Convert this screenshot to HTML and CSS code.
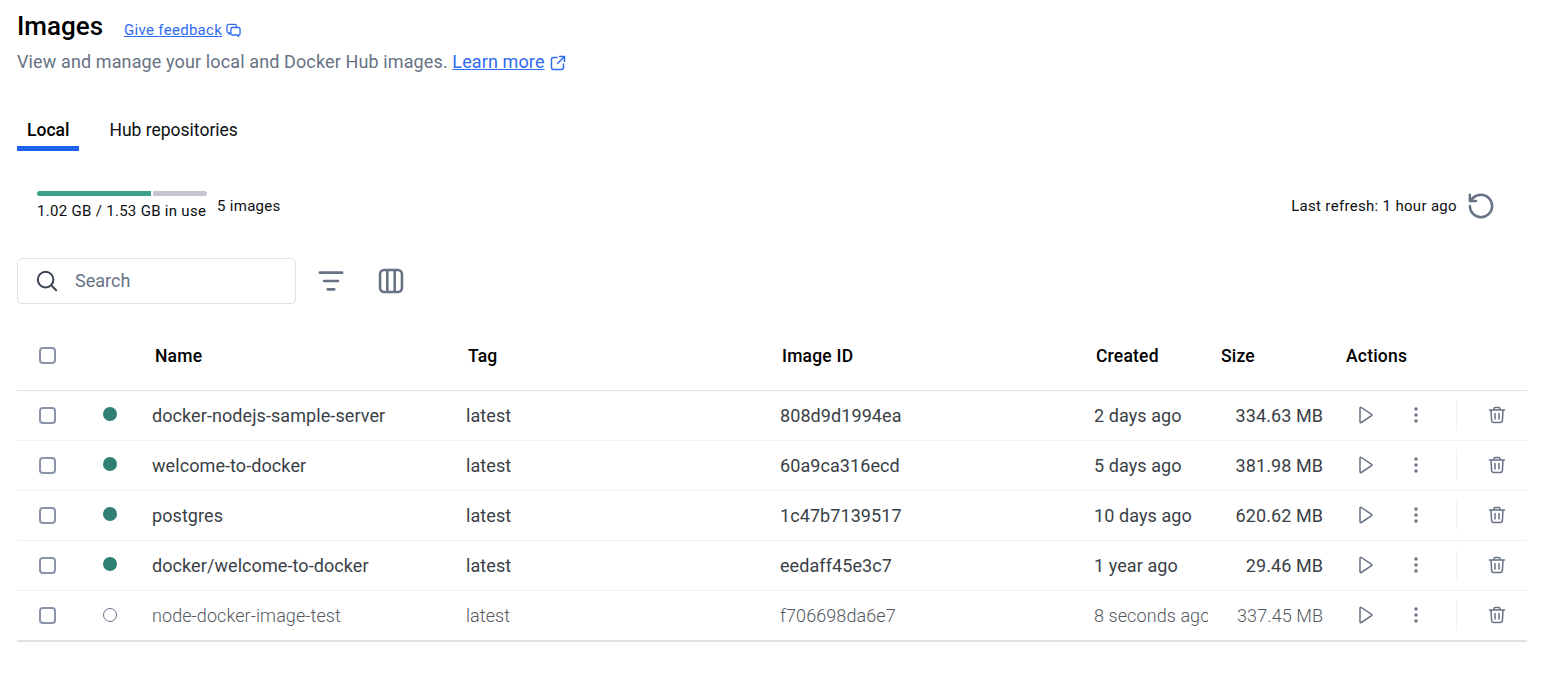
FILE: index.html
```html
<!DOCTYPE html>
<html lang="en">
<head>
<meta charset="utf-8">
<title>Images</title>
<link rel="stylesheet" href="styles.css">
</head>
<body>
<svg class="defs" width="0" height="0" aria-hidden="true">
  <defs>
    <symbol id="play" viewBox="0 0 20 20"><path d="M4 3.200v13.600c0 .7.7 1 1.300.7l10.300-6.800c.5-.3.5-1 0-1.300L5.300 2.500c-.6-.3-1.300 0-1.300.7z" fill="none" stroke="currentColor" stroke-width="1.500" stroke-linejoin="round"/></symbol>
    <symbol id="dots" viewBox="0 0 20 20"><circle cx="10" cy="4" r="1.700" fill="currentColor"/><circle cx="10" cy="10" r="1.700" fill="currentColor"/><circle cx="10" cy="16" r="1.700" fill="currentColor"/></symbol>
    <symbol id="trash" viewBox="0 0 20 20"><path d="M2.500 5h15M7 5V3.800C7 3 7.600 2.500 8.300 2.500h3.400c.7 0 1.300.5 1.300 1.300V5M4 5l.6 10.500c.1 1.200 1 2 2.200 2h6.400c1.200 0 2.100-.8 2.200-2L16 5M8 8.500v5.500M12 8.500v5.500" fill="none" stroke="currentColor" stroke-width="1.500" stroke-linecap="round" stroke-linejoin="round"/></symbol>
  </defs>
</svg>
<main class="page">
  <header class="head">
    <div class="title-row">
      <h1 class="title">Images</h1>
      <a class="feedback" href="#">Give feedback</a>
      <svg class="feedback-icon" viewBox="0 0 16 16"><path d="M11 4.500V3.200C11 2 10.200 1.500 9.300 1.500H2.700C1.700 1.500 1 2.200 1 3.200v5.300c0 1 .7 1.700 1.700 1.700h.5v1.800l2-1.800" fill="none" stroke="currentColor" stroke-width="1.400" stroke-linejoin="round"/><path d="M6.700 4.800h6.800c.9 0 1.500.6 1.500 1.500v5c0 .9-.6 1.500-1.500 1.500v1.700l-2-1.700H6.700c-.9 0-1.500-.6-1.500-1.500v-5c0-.9.600-1.500 1.500-1.500z" fill="none" stroke="currentColor" stroke-width="1.400" stroke-linejoin="round"/></svg>
    </div>
    <p class="subtitle">View and manage your local and Docker Hub images. <a class="learn" href="#">Learn more</a>
      <svg class="learn-icon" viewBox="0 0 16 16"><path d="M7 2.500H3.500c-1 0-2 .8-2 2v8c0 1.200 1 2 2 2h8c1.200 0 2-.8 2-2V9M9.500 1.500h5v5M14.500 1.500L7.500 8.500" fill="none" stroke="currentColor" stroke-width="1.500" stroke-linecap="round" stroke-linejoin="round"/></svg>
    </p>
  </header>

  <nav class="tabs">
    <a class="tab tab-active" href="#">Local</a>
    <a class="tab" href="#">Hub repositories</a>
  </nav>

  <section class="usage">
    <div class="usage-left">
      <div class="meter">
        <div class="meter-bar"><span class="meter-used"></span><span class="meter-free"></span></div>
        <div class="meter-text">1.02 GB / 1.53 GB in use</div>
      </div>
      <div class="count">5 images</div>
    </div>
    <div class="refresh">
      <span>Last refresh: 1 hour ago</span>
      <svg class="refresh-icon" viewBox="1.500 1.500 21 21"><path d="M3 12a9 9 0 1 0 9-9 9.750 9.750 0 0 0-6.740 2.740L3 8M3 3v5h5" fill="none" stroke="currentColor" stroke-width="2" stroke-linecap="round" stroke-linejoin="round"/></svg>
    </div>
  </section>

  <section class="toolbar">
    <label class="search">
      <svg class="search-icon" viewBox="0 0 24 24"><circle cx="10.500" cy="10.500" r="8.500" fill="none" stroke="currentColor" stroke-width="2.200"/><path d="M16.800 16.800L22 22" stroke="currentColor" stroke-width="2.200" stroke-linecap="round"/></svg>
      <span class="search-text">Search</span>
    </label>
    <svg class="tool-icon" viewBox="0 0 28 28"><path d="M2 5h24M6.500 14h15M10.500 23h7" stroke="currentColor" stroke-width="2.800" stroke-linecap="round"/></svg>
    <svg class="tool-icon" viewBox="0 0 28 28"><rect x="2.200" y="2.200" width="23.600" height="23.600" rx="4.500" fill="none" stroke="currentColor" stroke-width="2.800"/><path d="M10 2.500v23M18 2.500v23" stroke="currentColor" stroke-width="2.800"/></svg>
  </section>

  <section class="table">
    <div class="row row-head">
      <div class="cell-check"><span class="checkbox"></span></div>
      <div></div>
      <div class="th th-name">Name</div>
      <div class="th">Tag</div>
      <div class="th">Image ID</div>
      <div class="th">Created</div>
      <div class="th th-size">Size</div>
      <div class="th th-actions">Actions</div>
    </div>

    <div class="row">
      <div class="cell-check"><span class="checkbox"></span></div>
      <div class="cell-dot"><span class="dot"></span></div>
      <div class="td">docker-nodejs-sample-server</div>
      <div class="td">latest</div>
      <div class="td">808d9d1994ea</div>
      <div class="td td-created">2 days ago</div>
      <div class="td td-size">334.63 MB</div>
      <div class="actions">
        <svg class="act act-play"><use href="#play"/></svg>
        <svg class="act act-dots"><use href="#dots"/></svg>
        <span class="sep"></span>
        <svg class="act act-trash"><use href="#trash"/></svg>
      </div>
    </div>

    <div class="row">
      <div class="cell-check"><span class="checkbox"></span></div>
      <div class="cell-dot"><span class="dot"></span></div>
      <div class="td">welcome-to-docker</div>
      <div class="td">latest</div>
      <div class="td">60a9ca316ecd</div>
      <div class="td td-created">5 days ago</div>
      <div class="td td-size">381.98 MB</div>
      <div class="actions">
        <svg class="act act-play"><use href="#play"/></svg>
        <svg class="act act-dots"><use href="#dots"/></svg>
        <span class="sep"></span>
        <svg class="act act-trash"><use href="#trash"/></svg>
      </div>
    </div>

    <div class="row">
      <div class="cell-check"><span class="checkbox"></span></div>
      <div class="cell-dot"><span class="dot"></span></div>
      <div class="td">postgres</div>
      <div class="td">latest</div>
      <div class="td">1c47b7139517</div>
      <div class="td td-created">10 days ago</div>
      <div class="td td-size">620.62 MB</div>
      <div class="actions">
        <svg class="act act-play"><use href="#play"/></svg>
        <svg class="act act-dots"><use href="#dots"/></svg>
        <span class="sep"></span>
        <svg class="act act-trash"><use href="#trash"/></svg>
      </div>
    </div>

    <div class="row">
      <div class="cell-check"><span class="checkbox"></span></div>
      <div class="cell-dot"><span class="dot"></span></div>
      <div class="td">docker/welcome-to-docker</div>
      <div class="td">latest</div>
      <div class="td">eedaff45e3c7</div>
      <div class="td td-created">1 year ago</div>
      <div class="td td-size">29.46 MB</div>
      <div class="actions">
        <svg class="act act-play"><use href="#play"/></svg>
        <svg class="act act-dots"><use href="#dots"/></svg>
        <span class="sep"></span>
        <svg class="act act-trash"><use href="#trash"/></svg>
      </div>
    </div>

    <div class="row row-last">
      <div class="cell-check"><span class="checkbox"></span></div>
      <div class="cell-dot"><span class="dot dot-empty"></span></div>
      <div class="td td-light">node-docker-image-test</div>
      <div class="td td-light">latest</div>
      <div class="td td-light">f706698da6e7</div>
      <div class="td td-light td-created">8 seconds ago</div>
      <div class="td td-light td-size">337.45 MB</div>
      <div class="actions">
        <svg class="act act-play"><use href="#play"/></svg>
        <svg class="act act-dots"><use href="#dots"/></svg>
        <span class="sep"></span>
        <svg class="act act-trash"><use href="#trash"/></svg>
      </div>
    </div>
  </section>
</main>
</body>
</html>
```
FILE: styles.css
```css
* { box-sizing: border-box; }
html, body { margin: 0; padding: 0; background: #fff; }
body {
  font-family: Roboto, "Liberation Sans", sans-serif;
  color: #0b0f14;
  height: 698px;
  overflow: hidden;
}
.defs { position: absolute; }
.page { width: 1510px; margin-left: 17px; }

.head { height: 74px; padding-top: 12px; }
.title-row { display: flex; align-items: center; height: 28px; }
.title { margin: 0; font-size: 26px; line-height: 28px; font-weight: 500; color: #000; }
.feedback { margin-left: 21px; margin-top: 7px; font-size: 15px; line-height: 16px; color: #2e6bf0; letter-spacing: .3px; }
.feedback-icon { width: 15px; height: 15px; margin-left: 4px; margin-top: 9px; color: #2e6bf0; }
.subtitle { margin: 11px 0 0; font-size: 18px; line-height: 22px; letter-spacing: .12px; color: #677285; display: flex; align-items: center; white-space: pre; }
.learn { color: #2e6bf0; }
.learn-icon { width: 16px; height: 16px; margin-left: 5px; margin-top: 2px; color: #2e6bf0; }

.tabs { display: flex; height: 46px; margin-top: 31px; }
.tab { display: block; height: 46px; padding: 14px 10px 0; font-size: 17.500px; line-height: 22px; color: #0b0f14; text-decoration: none; margin-right: 20px; }
.tab-active { font-weight: 500; border-bottom: 5px solid #1d63ed; color: #000; }

.usage { display: flex; justify-content: space-between; align-items: flex-start; height: 60px; margin-top: 36px; }
.usage-left { display: flex; margin-left: 20px; padding-top: 4px; }
.meter { width: 170px; }
.meter-bar { display: flex; gap: 2px; height: 5px; }
.meter-used { width: 114px; background: #3aa08a; border-radius: 3px 0 0 3px; }
.meter-free { flex: 1; background: #c3c6d1; border-radius: 0 3px 3px 0; }
.meter-text { margin-top: 6px; font-size: 15px; line-height: 18px; white-space: nowrap; letter-spacing: .3px; }
.count { margin-left: 10px; margin-top: 6px; font-size: 15px; line-height: 18px; letter-spacing: .3px; }
.refresh { display: flex; align-items: center; gap: 11px; padding-right: 33px; font-size: 15px; letter-spacing: .32px; height: 38px; }
.refresh-icon { width: 26px; height: 26px; color: #677285; }

.toolbar { display: flex; align-items: center; height: 46px; margin-top: 11px; }
.search { display: flex; align-items: center; width: 279px; height: 46px; border: 1px solid #dfe1e6; border-radius: 5px; padding-left: 18px; }
.search-icon { width: 22px; height: 22px; color: #3a4250; }
.search-text { margin-left: 17px; margin-bottom: 2px; font-size: 18px; color: #677285; }
.tool-icon { width: 26px; height: 26px; color: #677285; margin-left: 22px; }
.tool-icon + .tool-icon { margin-left: 34px; }

.table { margin-top: 18px; }
.row {
  display: grid;
  grid-template-columns: 70px 46px 314px 314px 314px 133px 115px 204px;
  align-items: center;
  height: 50px;
  border-bottom: 1px solid #f0f1f3;
}
.row-head { height: 69px; border-bottom: 1px solid #dfe1e6; padding-bottom: 1px; }
.row-last { height: 51px; border-bottom: 2px solid #dfe1e6; }
.cell-check { padding-left: 23px; padding-bottom: 1px; display: flex; }
.checkbox { width: 17px; height: 17px; margin-left: -1px; border: 2px solid #8a93a8; border-radius: 4px; }
.cell-dot { display: flex; justify-content: center; }
.dot { width: 14px; height: 14px; border-radius: 50%; background: #2e7f74; margin-bottom: 4px; }
.dot-empty { background: none; border: 1.500px solid #677285; margin-bottom: 2px; }
.th { padding-left: 21px; font-size: 17.500px; font-weight: 500; letter-spacing: .2px; color: #000; }
.th-name { padding-left: 22px; }
.th-size { padding-left: 13px; }
.th-actions { padding-left: 23px; }
.td { padding-left: 19px; font-size: 18px; letter-spacing: .08px; color: #3a3f47; white-space: nowrap; overflow: hidden; }
.td-light { color: #55595f; font-weight: 300; }
.td-size { padding-left: 0; text-align: right; }
.actions { display: flex; align-items: center; height: 30px; margin-bottom: 2px; padding-left: 33px; color: #677285; }
.act { width: 20px; height: 20px; flex: none; }
.act-dots { margin-left: 30px; }
.sep { width: 1px; height: 30px; background: #f0f1f3; margin-left: 30px; }
.act-trash { margin-left: 30px; }
```
